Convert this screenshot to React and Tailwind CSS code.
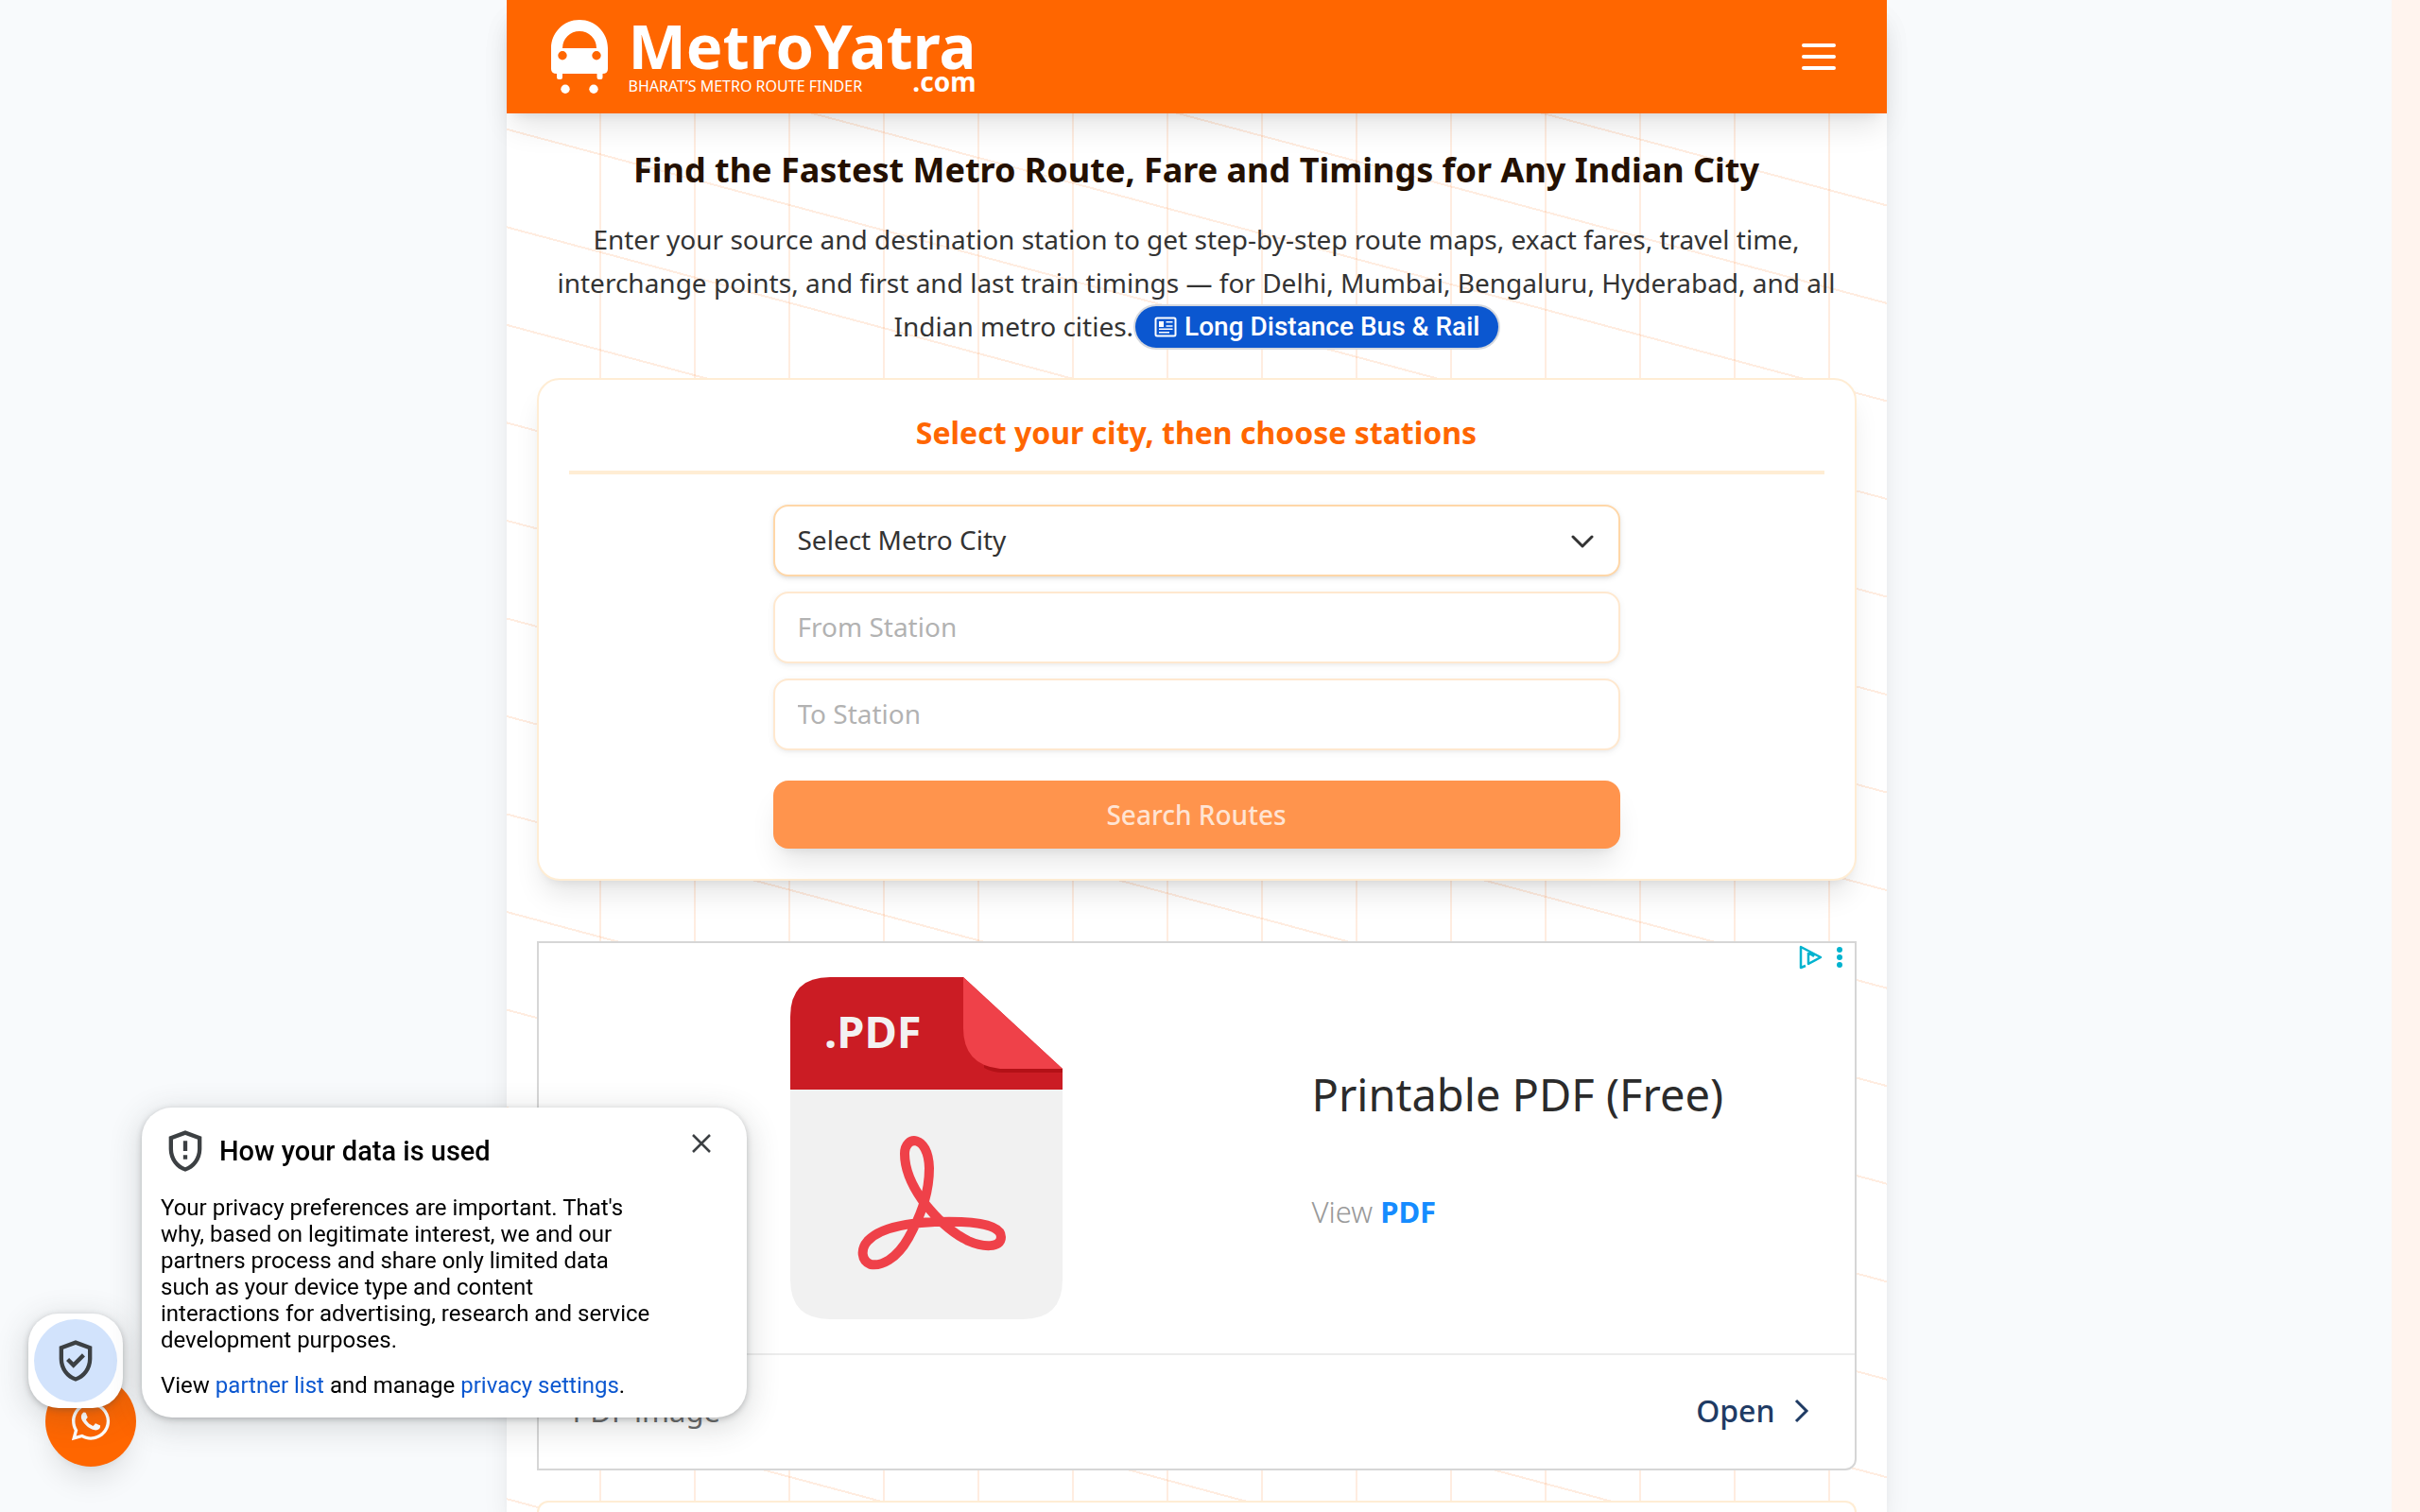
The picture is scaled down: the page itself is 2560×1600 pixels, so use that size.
import React, { useState } from 'react';
import { MdOutlineGppGood, MdOutlineGppMaybe } from 'react-icons/md';
import { FaWhatsapp } from 'react-icons/fa6';

const CITIES = ['Delhi', 'Mumbai', 'Bengaluru', 'Hyderabad'];

function MetroLogo() {
  return (
    <a href="#" className="flex items-start text-white">
      <svg width="60" height="78" viewBox="0 0 60 78" className="mt-[21px]" aria-hidden="true">
        <path
          fill="currentColor"
          fillRule="evenodd"
          d="M30 0C46.600 0 60 13.400 60 30V52Q60 57 54.500 57V61Q54.500 63 52.500 63H50.500Q48.500 63 48.500 61V57H12V61Q12 63 10 63H8Q6 63 6 61V57Q0 57 0 52V30C0 13.400 13.400 0 30 0ZM12 30H48A18 18 0 0 0 12 30ZM12 33a4.700 4.700 0 1 0 0 9.400a4.700 4.700 0 1 0 0-9.400ZM48 33a4.700 4.700 0 1 0 0 9.400a4.700 4.700 0 1 0 0-9.400Z"
        />
        <circle cx="15" cy="73.300" r="4.700" fill="currentColor" />
        <circle cx="45" cy="73.300" r="4.700" fill="currentColor" />
      </svg>
      <span className="ml-[22px] mt-4 flex flex-col">
        <span className="text-[65px] leading-[64px] font-bold">MetroYatra</span>
        <span className="-mt-1 flex items-baseline justify-between">
          <span className="text-[16px] leading-5">BHARAT’S METRO ROUTE FINDER</span>
          <span className="text-[28px] leading-5 font-bold">.com</span>
        </span>
      </span>
    </a>
  );
}

function Header() {
  return (
    <header className="relative z-10 flex h-[120px] items-start justify-between bg-[#ff6600] pl-[47px] pr-[54px] shadow-[0_20px_30px_-6px_rgba(0,0,0,0.1),0_8px_12px_-8px_rgba(0,0,0,0.1)]">
      <MetroLogo />
      <button type="button" aria-label="Open menu" className="mt-[46px] flex w-9 flex-col gap-2">
        <span className="h-1 w-full rounded-sm bg-white" />
        <span className="h-1 w-full rounded-sm bg-white" />
        <span className="h-1 w-full rounded-sm bg-white" />
      </button>
    </header>
  );
}

function NewsIcon() {
  return (
    <svg width="24" height="22" viewBox="0 0 24 22" fill="none" stroke="currentColor" strokeWidth="2" aria-hidden="true">
      <rect x="1.500" y="1.500" width="21" height="19" rx="1.500" />
      <rect x="5" y="5" width="5" height="6" fill="currentColor" stroke="none" />
      <path d="M12.500 5.800H19.500M12.500 10H19.500M5 13.200H19.500M5 16.700H16" strokeWidth="1.600" />
    </svg>
  );
}

function RouteForm() {
  const [city, setCity] = useState('');

  return (
    <section className="mt-8 rounded-3xl border-2 border-orange-100 bg-white p-8 shadow-[0_20px_30px_-6px_rgba(0,0,0,0.1),0_8px_12px_-8px_rgba(0,0,0,0.1)]">
      <h2 className="border-b-4 border-orange-100 pb-4 text-center text-[32px] leading-[48px] font-bold text-[#ff6600]">
        Select your city, then choose stations
      </h2>
      <form className="mx-auto mt-8 flex max-w-4xl flex-col gap-4 text-[28px]">
        <div className="relative">
          <select
            aria-label="Select Metro City"
            value={city}
            onChange={(e) => setCity(e.target.value)}
            className="block h-[76px] w-full appearance-none rounded-2xl border-2 border-orange-200 bg-white px-6 pb-[2px] text-[#333333] shadow-[0_2px_6px_rgba(0,0,0,0.1),0_2px_4px_-2px_rgba(0,0,0,0.1)]"
          >
            <option value="">Select Metro City</option>
            {CITIES.map((c) => (
              <option key={c}>{c}</option>
            ))}
          </select>
          <svg width="24" height="14" viewBox="0 0 24 14" className="pointer-events-none absolute right-7 top-8" fill="none" stroke="#333333" strokeWidth="3" strokeLinecap="round" strokeLinejoin="round" aria-hidden="true">
            <path d="M2 2l10 10L22 2" />
          </svg>
        </div>
        <input
          type="text"
          aria-label="From Station"
          placeholder="From Station"
          disabled={!city}
          className="h-[76px] w-full rounded-2xl border-2 border-orange-200 bg-white px-6 pb-[2px] shadow-[0_2px_6px_rgba(0,0,0,0.1),0_2px_4px_-2px_rgba(0,0,0,0.1)] placeholder:text-[#757575] disabled:opacity-55"
        />
        <input
          type="text"
          aria-label="To Station"
          placeholder="To Station"
          disabled={!city}
          className="h-[76px] w-full rounded-2xl border-2 border-orange-200 bg-white px-6 pb-[2px] shadow-[0_2px_6px_rgba(0,0,0,0.1),0_2px_4px_-2px_rgba(0,0,0,0.1)] placeholder:text-[#757575] disabled:opacity-55"
        />
        <button
          type="submit"
          disabled={!city}
          className="mt-4 h-[72px] rounded-2xl bg-[#ff944d] font-medium text-[#ffe4d3] shadow-[0_20px_30px_-6px_rgba(0,0,0,0.1),0_8px_12px_-8px_rgba(0,0,0,0.1)]"
        >
          Search Routes
        </button>
      </form>
    </section>
  );
}

function PdfFileIcon() {
  return (
    <svg width="288" height="362" viewBox="0 0 288 362" aria-hidden="true">
      <path d="M0 118H288V320Q288 362 246 362H42Q0 362 0 320Z" fill="#f1f1f1" />
      <path d="M0 42Q0 0 42 0H183L288 97V119H0Z" fill="#cb1c24" />
      <path d="M205 90L288 97V101H226Q213 101 205 96Z" fill="#b31117" />
      <path d="M183 0L288 97H222Q183 93 183 54Z" fill="#ef4149" />
      <text x="36" y="75" fill="#f3f1f1" fontSize="47" fontWeight="700" fontFamily="Noto Sans, sans-serif">.PDF</text>
      <path
        d="M141 238C128 220 121 202 121 187C121 167 146 166 147 202C147 232 136 256 125 276C112 299 96 306 85 304C75 300 74 288 82 279C99 261 140 258 181 259C206 260 223 265 223 275C223 287 204 286 188 279C168 269 154 254 141 238Z"
        fill="none"
        stroke="#ef4149"
        strokeWidth="10"
      />
    </svg>
  );
}

function AdBanner() {
  return (
    <aside className="mt-16 rounded-br-xl border-2 border-[#d6d6d6] bg-white">
      <div className="relative flex h-[434px] items-start">
        <div className="ml-[266px] mt-9">
          <PdfFileIcon />
        </div>
        <div className="ml-[264px] mt-32">
          <p className="text-[47px] leading-[64px] text-[#2b2b2b]">Printable PDF (Free)</p>
          <p className="mt-[72px] text-[31px] leading-10 font-light text-[#999999]">
            View <a href="#" className="font-bold text-[#168cff]">PDF</a>
          </p>
        </div>
        <div className="absolute right-2 top-0 flex items-center gap-[10px] pt-[2px]">
          <svg width="26" height="26" viewBox="0 0 26 26" fill="none" stroke="#00b3cf" strokeWidth="2.500" strokeLinejoin="round" aria-hidden="true">
            <path d="M8 22L3 24V2L24 13L11 20V8L17 12" />
          </svg>
          <button type="button" aria-label="Ad options" className="flex w-4 flex-col items-center gap-[2px]">
            <span className="size-[6px] rounded-full bg-[#00b3cf]" />
            <span className="size-[6px] rounded-full bg-[#00b3cf]" />
            <span className="size-[6px] rounded-full bg-[#00b3cf]" />
          </button>
        </div>
      </div>
      <div className="flex h-[122px] items-center justify-between border-t-2 border-[#ececec] pb-[2px] pl-9 pr-12 text-[32px]">
        <span className="text-[31px] text-[#666666]">PDF image</span>
        <a href="#" className="flex items-center gap-5 font-medium text-[#1f3b64]">
          Open
          <svg width="16" height="26" viewBox="0 0 16 26" fill="none" stroke="currentColor" strokeWidth="3" aria-hidden="true">
            <path d="M2 2l11 11L2 24" />
          </svg>
        </a>
      </div>
    </aside>
  );
}

function PrivacyDialog({ onClose }) {
  return (
    <div role="dialog" aria-labelledby="privacy-title" className="fixed bottom-[100px] left-[150px] z-20 h-[328px] w-[640px] rounded-[32px] bg-white px-5 pt-5 font-[Roboto,sans-serif] text-[24px] leading-7 text-black shadow-[0_2px_6px_rgba(60,64,67,0.3),0_8px_30px_6px_rgba(60,64,67,0.15)]">
      <div className="flex h-[52px] items-center">
        <MdOutlineGppMaybe size={52} className="text-[#3c4043]" />
        <h2 id="privacy-title" className="ml-[10px] text-[29px] font-medium">How your data is used</h2>
        <button type="button" aria-label="Close" onClick={onClose} className="ml-auto mr-[18px] -mt-4">
          <svg width="20" height="20" viewBox="0 0 20 20" stroke="#3c4043" strokeWidth="2.500" aria-hidden="true">
            <path d="M1 1l18 18M19 1L1 19" />
          </svg>
        </button>
      </div>
      <p className="mt-5">
        Your privacy preferences are important. That's<br />
        why, based on legitimate interest, we and our<br />
        partners process and share only limited data<br />
        such as your device type and content<br />
        interactions for advertising, research and service<br />
        development purposes.
      </p>
      <p className="mt-5">
        View <a href="#" className="text-[#0b57d0]">partner list</a> and manage <a href="#" className="text-[#0b57d0]">privacy settings</a>.
      </p>
    </div>
  );
}

export default function App() {
  const [showPrivacy, setShowPrivacy] = useState(true);

  return (
    <div className="min-h-screen bg-slate-50 pr-[29px] font-['Noto_Sans',sans-serif]">
      <div className="mx-auto flex min-h-screen max-w-[1460px] flex-col bg-white bg-[repeating-linear-gradient(90deg,transparent_0,transparent_98px,rgba(255,102,0,0.12)_98px,rgba(255,102,0,0.12)_100px),repeating-linear-gradient(195deg,transparent_0,transparent_9px,rgba(255,102,0,0.12)_9px,rgba(255,102,0,0.12)_11px,transparent_11px,transparent_100px)] shadow-[0_20px_30px_-6px_rgba(0,0,0,0.1),0_8px_12px_-8px_rgba(0,0,0,0.1)]">
        <Header />
        <main className="flex flex-1 flex-col px-8 pt-8">
          <h1 className="text-center text-[36px] leading-[56px] font-bold text-[#241000]">
            Find the Fastest Metro Route, Fare and Timings for Any Indian City
          </h1>
          <p className="mt-[22px] text-center text-[28px] leading-[46px] text-[#333333]">
            Enter your source and destination station to get step-by-step route maps, exact fares, travel time, interchange points, and first and last train timings — for Delhi, Mumbai, Bengaluru, Hyderabad, and all Indian metro cities.
            <a href="#" className="ml-[2px] mt-[2px] inline-flex h-11 items-center gap-2 rounded-full bg-[#0b57d0] px-5 align-top font-[Roboto,sans-serif] leading-9 font-medium text-white ring-2 ring-[#d5d8dd]">
              <NewsIcon />
              Long Distance Bus &amp; Rail
            </a>
          </p>
          <RouteForm />
          <AdBanner />
          <section className="mt-8 flex-1 rounded-t-3xl border-2 border-b-0 border-orange-100 bg-white" />
        </main>
      </div>

      <div className="fixed inset-y-0 right-0 w-[30px] bg-[#fff4ee]" />

      <a href="#" aria-label="WhatsApp" className="fixed bottom-12 left-12 z-10 flex size-24 items-center justify-center rounded-full bg-[#ff6600] text-white shadow-[0_20px_30px_-6px_rgba(0,0,0,0.1),0_8px_12px_-8px_rgba(0,0,0,0.1)]">
        <FaWhatsapp size={46} />
      </a>
      <button
        type="button"
        aria-label="Privacy settings"
        onClick={() => setShowPrivacy(!showPrivacy)}
        className="fixed bottom-[110px] left-[30px] z-20 flex size-[100px] items-center justify-center rounded-[32px] bg-white shadow-[0_2px_6px_rgba(60,64,67,0.3),0_8px_30px_6px_rgba(60,64,67,0.15)]"
      >
        <span className="flex size-[88px] items-center justify-center rounded-full bg-[#d2e3fc]">
          <MdOutlineGppGood size={52} className="text-[#3c4043]" />
        </span>
      </button>
      {showPrivacy && <PrivacyDialog onClose={() => setShowPrivacy(false)} />}
    </div>
  );
}
